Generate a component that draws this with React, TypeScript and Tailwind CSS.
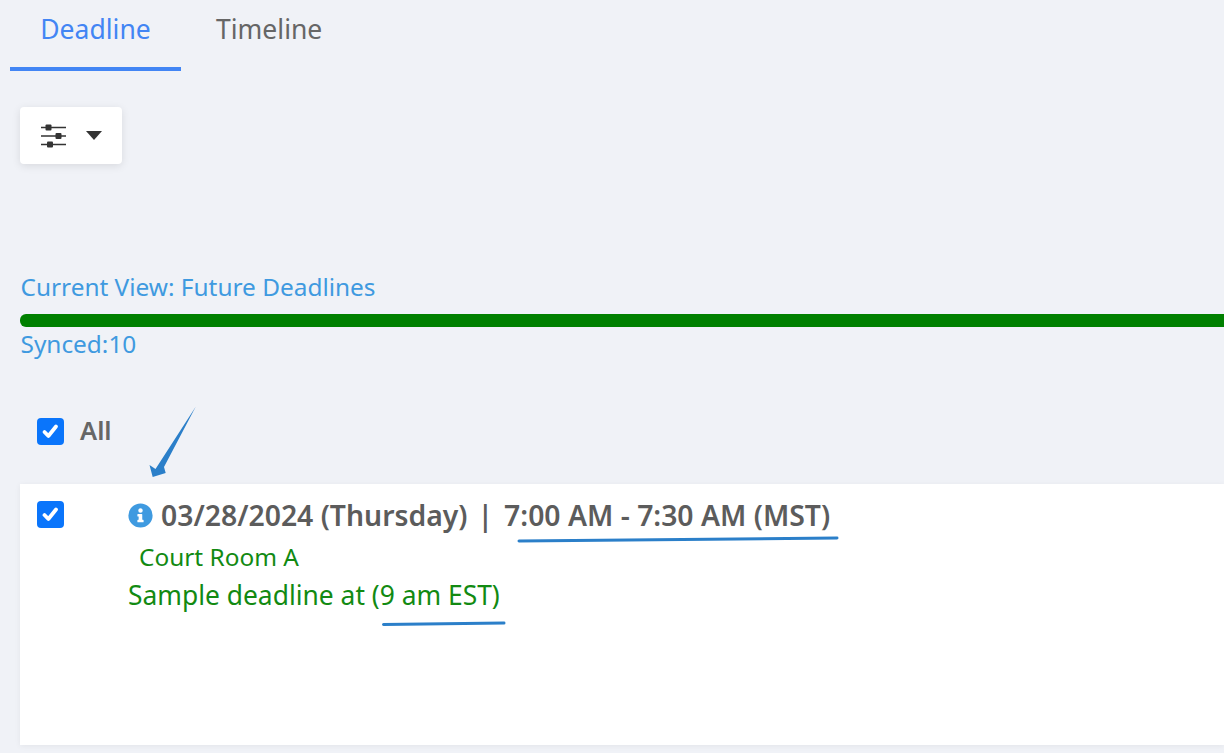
function Check({ className = "" }: { className?: string }) {
  return (
    <span className={`flex h-[27px] w-[27px] shrink-0 items-center justify-center rounded-[4px] bg-[#0a75fb] ${className}`}>
      <svg width="19" height="19" viewBox="0 0 19 19" fill="none">
        <path d="M3.5 10 L7.4 14 L15 4.5" stroke="#fff" strokeWidth="3.8" strokeLinecap="round" strokeLinejoin="round" />
      </svg>
    </span>
  );
}

export default function App() {
  return (
    <div className="relative h-[753px] w-[1224px] overflow-hidden bg-[#f0f2f7] font-['Noto_Sans',sans-serif]">
      <div className="flex h-[71px] pl-[10px]">
        <div className="flex h-[71px] w-[171px] justify-center border-b-4 border-[#4285f4] pt-[10px] text-[26.500px] leading-[38px] text-[#4285f4]">
          Deadline
        </div>
        <div className="ml-[35px] pt-[10px] text-[26.500px] leading-[38px] text-[#666666]">Timeline</div>
      </div>

      <div className="ml-[20px] mt-[36px] flex h-[57px] w-[102px] items-center rounded-[4px] bg-white pl-[20px] shadow-[0_2px_8px_rgba(0,0,0,0.1)]">
        <svg width="27" height="26" viewBox="0 0 27 26" fill="none" className="text-[#333]">
          <path d="M1 4.500H26M1 13H26M1 21.500H26" stroke="currentColor" strokeWidth="1.6" />
          <rect x="5.500" y="1.500" width="6" height="6" fill="currentColor" rx="1" />
          <rect x="15.500" y="10" width="6" height="6" fill="currentColor" rx="1" />
          <rect x="7" y="18.500" width="6" height="6" fill="currentColor" rx="1" />
        </svg>
        <svg width="16" height="9" viewBox="0 0 16 9" className="ml-[19px]">
          <path d="M0 0H16L8 9Z" fill="#333" />
        </svg>
      </div>

      <div className="ml-[20.500px] mt-[105px] text-[24.400px] leading-[36px] text-[#3f9ae0]">Current View: Future Deadlines</div>
      <div className="ml-[20px] mt-[9px] h-[13px] rounded-l-[6px] bg-[#008000]" />
      <div className="ml-[20.500px] -mt-[1px] text-[24.400px] leading-[36px] text-[#3f9ae0]">Synced:10</div>

      <div className="ml-[37px] mt-[56px] flex h-[27px] items-center">
        <Check />
        <span className="ml-[16px] -mt-[2px] text-[25.500px] font-semibold leading-[27px] text-[#666666]">All</span>
      </div>

      <div className="ml-[20px] mt-[39px] flex h-[261px] bg-white pl-[17px] pt-[17px] shadow-[0_1px_6px_rgba(0,0,0,0.06)]">
        <Check />
        <div className="-mt-[1px] ml-[64px]">
          <div className="flex h-[30px] items-center whitespace-pre text-[28.350px] font-semibold leading-[30px] text-[#5c5c5c]">
            <svg width="25" height="25" viewBox="0 0 512 512" className="mr-[8px] shrink-0">
              <path
                fill="#3f9ae0"
                d="M256 8a248 248 0 1 0 0 496 248 248 0 0 0 0-496zm0 102a46 46 0 1 1 0 92 46 46 0 0 1 0-92zm64 274c0 7-5 12-12 12H204c-7 0-12-5-12-12v-28c0-7 5-12 12-12h14v-68h-14c-7 0-12-5-12-12v-28c0-7 5-12 12-12h76c7 0 12 5 12 12v108h16c7 0 12 5 12 12v28z"
              />
            </svg>
            <span>03/28/2024 (Thursday)</span>
            <span className="ml-[10px] mr-[11px]">|</span>
            <span>7:00 AM - 7:30 AM (MST)</span>
          </div>
          <div className="ml-[11px] mt-[11px] text-[24.400px] leading-[32px] text-[#128a12]">Court Room A</div>
          <div className="mt-[4px] text-[26.400px] leading-[36px] text-[#128a12]">Sample deadline at (9 am EST)</div>
        </div>
      </div>

      {/* Annotations drawn over the screenshot */}
      <svg width="1224" height="753" viewBox="0 0 1224 753" fill="none" className="pointer-events-none absolute left-0 top-0">
        <path d="M195.700 406.700 L164 467 L165.700 473 L152.700 477 L149.500 465 L155.500 469 Z" fill="#2b7fc9" />
        <path d="M519 541 L837 538" stroke="#2b7fc9" strokeWidth="3" strokeLinecap="round" />
        <path d="M383.500 624.500 L504 623" stroke="#2b7fc9" strokeWidth="3" strokeLinecap="round" />
      </svg>
    </div>
  );
}
